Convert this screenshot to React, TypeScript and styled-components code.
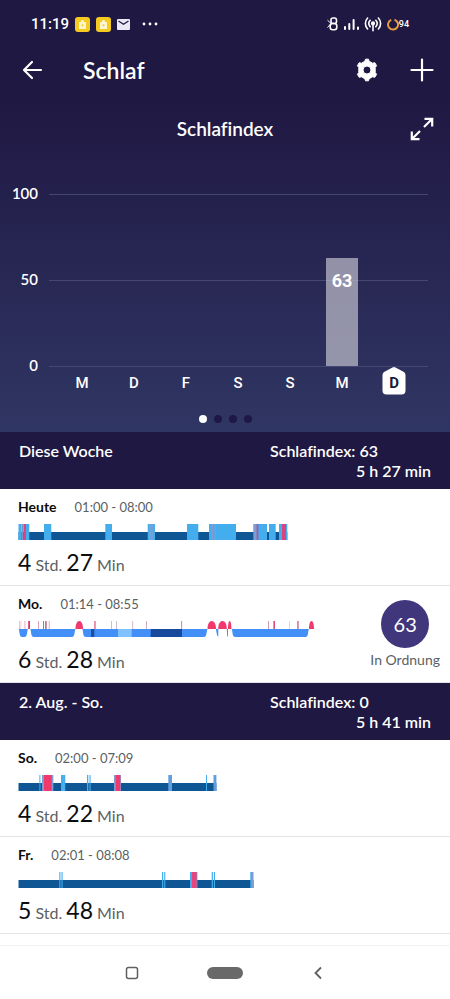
import React from "react";
import styled, { createGlobalStyle } from "styled-components";

const GlobalStyle = createGlobalStyle`
  * { box-sizing: border-box; }
  body {
    margin: 0;
    background: #fff;
    font-family: Lato, "Open Sans", sans-serif;
    font-variant-ligatures: none;
  }
  button { border: 0; padding: 0; background: none; color: inherit; font: inherit; cursor: pointer; }
  h1, h2, h3, p { margin: 0; font-size: inherit; font-weight: inherit; }
  svg { display: block; flex: none; }
`;

const Page = styled.div`
  display: flex;
  flex-direction: column;
  min-height: 100vh;
`;

const Hero = styled.section`
  color: #fff;
  background: linear-gradient(#1f1842 0, #1f1842 96px, #221c48 150px, #303663 100%);
`;

const StatusBar = styled.div`
  display: flex;
  align-items: center;
  justify-content: space-between;
  height: 48px;
  padding: 0 41px 0 31px;
  font-family: Roboto, sans-serif;
`;

const StatusGroup = styled.div<{ $gap: number }>`
  display: flex;
  align-items: center;
  gap: ${(p) => p.$gap}px;
`;

const Clock = styled.span`
  font-size: 15px;
  font-weight: 500;
`;

const Battery = styled.span`
  display: flex;
  align-items: center;
  font-size: 9px;
  font-weight: 500;
`;

const AppBar = styled.header`
  display: flex;
  align-items: center;
  height: 44px;
  padding: 0 16px 0 20px;
`;

const AppTitle = styled.h1`
  flex: 1;
  margin-left: 39px;
  font-size: 23px;
  line-height: 28px;
  font-weight: 600;
`;

const IconButton = styled.button`
  display: flex;
  align-items: center;
  justify-content: center;
  width: 24px;
  height: 24px;
`;

const Actions = styled.div`
  display: flex;
  gap: 31px;
`;

const ChartHead = styled.div`
  display: grid;
  grid-template-columns: 1fr auto 1fr;
  align-items: center;
  justify-items: end;
  height: 74px;
  padding: 0 16px;
`;

const ChartTitle = styled.h2`
  grid-column: 2;
  font-size: 19px;
  line-height: 24px;
  font-weight: 600;
`;

const Plot = styled.div`
  display: grid;
  grid-template-columns: 38px 1fr;
  column-gap: 11px;
  margin: 18px 22px 0 0;
`;

const Axis = styled.div`
  display: flex;
  flex-direction: column;
  justify-content: space-between;
  align-items: flex-end;
  height: 192px;
  font-size: 15px;
  line-height: 18px;
  font-weight: 600;
  padding-bottom: 2px;
`;

const GridLines = styled.div`
  grid-area: 1 / 2;
  display: flex;
  flex-direction: column;
  justify-content: space-between;
  padding: 10px 0 9px;
`;

const GridLine = styled.div`
  height: 1px;
  background: #454674;
`;

const Bars = styled.div`
  grid-area: 1 / 2;
  display: grid;
  grid-template-columns: repeat(7, 1fr);
  align-items: end;
  justify-items: center;
  padding: 10px 8px 10px 7px;
`;

const Bar = styled.div`
  width: 32px;
  padding-top: 12px;
  background: rgba(205, 203, 214, 0.65);
  font: 700 18px/22px Roboto, sans-serif;
  text-align: center;
`;

const Days = styled.div`
  grid-column: 2;
  display: grid;
  grid-template-columns: repeat(7, 1fr);
  justify-items: center;
  align-items: center;
  height: 28px;
  margin-top: -9px;
  padding: 0 8px 0 7px;
  font: 500 15px/20px Roboto, sans-serif;
`;

const Today = styled.span`
  display: grid;
  place-items: center;
  color: #14203a;
  font-weight: 700;

  > * { grid-area: 1 / 1; }
  > span { margin-top: 3px; }
`;

const DayName = styled.span`
  margin-top: 4px;
`;

const Dots = styled.div`
  display: flex;
  justify-content: center;
  gap: 7px;
  padding: 20px 0 9px;
`;

const Dot = styled.button<{ $on?: boolean }>`
  width: 8px;
  height: 8px;
  border-radius: 50%;
  background: ${(p) => (p.$on ? "#fff" : "#1f1746")};
`;

const WeekHead = styled.header`
  display: flex;
  justify-content: space-between;
  height: 57px;
  padding: 9px 19px 0;
  background: #1f1842;
  color: #fff;
  font-size: 16px;
  line-height: 20px;
  font-weight: 600;
`;

const WeekStats = styled.div`
  display: flex;
  flex-direction: column;
  width: 161px;

  > :last-child { align-self: flex-end; }
`;

const Night = styled.article`
  display: flex;
  justify-content: space-between;
  height: 97px;
  padding: 8px 10px 0 18px;
  border-bottom: 1px solid #e4e4e6;
  color: #5b5f63;
`;

const NightHead = styled.div`
  display: flex;
  gap: 18px;
  font-size: 13px;
  line-height: 20px;
`;

const NightDay = styled.h3`
  font-size: 14px;
  font-weight: 700;
  color: #0c0c0e;
`;

const Timeline = styled.svg`
  margin: 7px 0 11px;
`;

const Duration = styled.p`
  font-size: 16px;
  line-height: 28px;
`;

const Amount = styled.span`
  font-size: 23px;
  line-height: 23px;
  color: #0c0c0e;
`;

const Score = styled.div`
  display: flex;
  flex-direction: column;
  align-items: center;
  margin-top: 6px;
  font-size: 14px;
  line-height: 24px;
`;

const ScoreDisc = styled.div`
  width: 48px;
  height: 48px;
  border-radius: 50%;
  background: #40367c;
  color: #fff;
  font-size: 20px;
  line-height: 48px;
  text-align: center;
`;

const NavBar = styled.nav`
  display: flex;
  align-items: center;
  justify-content: center;
  gap: 45px;
  height: 54px;
  margin-top: auto;
  border-top: 1px solid #f3f3f3;
  color: #606060;
`;

const NavButton = styled.button`
  display: flex;
  align-items: center;
  justify-content: center;
  width: 48px;
  height: 48px;
`;

const DEEP = "#0f5694";
const SKY = "#43adee";
const PINK = "#f0396c";
const MIX = "#7f9dd4";
const BLUE = "#418ff7";

/* [start, end, colour] */
type Span = [number, number, string];

function Restless({ end, spans }: { end: number; spans: Span[] }) {
  return (
    <Timeline width="300" height="16" viewBox="0 0 300 16" role="img" aria-label="Schlafverlauf">
      <rect x="0.5" y="8" width={end - 0.5} height="8" fill={DEEP} />
      {spans.map(([a, b, c], i) => (
        <rect key={i} x={a} width={b - a} height="16" fill={c} />
      ))}
    </Timeline>
  );
}

const blocks: Span[] = [
  [73, 76.3, "#1b4fa5"],
  [100, 113.7, "#80c2fd"],
  [132.7, 164, "#174a9d"],
];

const sleepRuns: [number, number][] = [[0.8, 10], [12.4, 57.5], [64.4, 189.5], [213.8, 291]];

const domes: [number, number][] = [[57.5, 65], [189.5, 198], [200.2, 208.8], [210, 213.4], [291, 296]];

const ticks: Span[] = [
  [1, 1.7, "#e6a6b9"], [2.6, 3.2, "#eab5c4"], [6.6, 7.3, "#e48ba5"], [10.2, 12, "#d93766"],
  [20, 20.8, "#df91a8"], [25, 26, "#dd5b80"], [27.2, 28.6, "#a85683"], [30.8, 31.6, "#df91a8"],
  [76.3, 77.6, "#dd5b80"], [93, 93.7, "#b4a3bb"], [98, 98.7, "#b4a3bb"], [114.4, 115.1, "#cc98ac"],
  [128, 128.7, "#c58aa5"], [163.3, 164.1, "#b66b92"], [250, 250.8, "#c9839e"], [255.4, 257, "#d94b76"],
  [271.4, 272, "#d5b4c2"], [279.3, 280.6, "#c85b81"],
];

function Stages() {
  return (
    <Timeline width="300" height="16" viewBox="0 0 300 16" role="img" aria-label="Schlafphasen">
      {sleepRuns.map(([a, b]) => (
        <path key={a} fill={BLUE} d={`M${a} 8H${b}C${b - 1.2} 10 ${b - 0.3} 16 ${b - 3.5} 16H${a + 3.5}C${a + 0.3} 16 ${a + 1} 11 ${a} 8Z`} />
      ))}
      <path fill={BLUE} d="M198 8H200.3V15.5Q198.8 15.5 198 8ZM208.8 8H210V15.5H209.2Z" />
      {blocks.map(([a, b, c]) => (
        <rect key={a} x={a} y="8" width={b - a} height="8" fill={c} />
      ))}
      {domes.map(([a, b]) => (
        <path key={a} fill={PINK} d={`M${a} 8C${a} 3 ${a + (b - a) / 5} 0 ${(a + b) / 2} 0S${b} 3 ${b} 8Z`} />
      ))}
      {ticks.map(([a, b, c]) => (
        <rect key={a} x={a} width={b - a} height="8" fill={c} />
      ))}
    </Timeline>
  );
}

const todaySpans: Span[] = [
  [0.5, 3.5, SKY], [3.5, 5.5, "#7894cc"], [5.5, 8, "#dc457c"], [8, 11.3, SKY], [26, 33.3, SKY], [87.3, 94, SKY],
  [129.7, 137, SKY], [131, 135.5, "#6ea4dc"], [169, 180.3, SKY], [191, 218, SKY], [193.5, 195, MIX], [196.5, 198, MIX],
  [235.3, 249, SKY], [236, 238.6, MIX], [238.6, 240.3, "#c34e8a"], [251, 257.7, SKY], [261, 269.3, SKY],
  [264, 268, "#dc457c"],
];

const sundaySpans: Span[] = [
  [21.4, 22.4, SKY], [24, 35.3, MIX], [26, 33.7, PINK], [43, 47.3, SKY], [45, 46, MIX], [69, 70.3, SKY],
  [71.5, 72.6, SKY], [96, 103, MIX], [97.7, 102.3, PINK], [150.3, 154, "#619fdc"], [188, 189, SKY], [195.5, 198.4, "#619fdc"],
];

const fridaySpans: Span[] = [
  [41.3, 42.4, SKY], [43.5, 44.6, SKY], [144, 145.2, SKY], [146.2, 147.3, SKY], [172, 179.4, SKY],
  [174, 178.7, "#e8457c"], [193.7, 194.9, SKY], [195.9, 197, SKY], [232.3, 234, SKY], [234, 235.5, MIX],
];

interface NightProps {
  day: string;
  time: string;
  hours: number;
  minutes: number;
  children: React.ReactNode;
  score?: React.ReactNode;
}

function NightRow({ day, time, hours, minutes, children, score }: NightProps) {
  return (
    <Night>
      <div>
        <NightHead>
          <NightDay>{day}</NightDay>
          <span>{time}</span>
        </NightHead>
        {children}
        <Duration>
          <Amount>{hours}</Amount> Std. <Amount>{minutes}</Amount> Min
        </Duration>
      </div>
      {score}
    </Night>
  );
}

function WeekHeader({ title, index, total }: { title: string; index: number; total: string }) {
  return (
    <WeekHead>
      <h2>{title}</h2>
      <WeekStats>
        <span>Schlafindex: {index}</span>
        <span>{total}</span>
      </WeekStats>
    </WeekHead>
  );
}

function AppBadge() {
  return (
    <svg width="15" height="15" viewBox="0 0 15 15">
      <rect width="15" height="15" rx="3" fill="#f5cb22" />
      <path d="M4 5h2L6.5 3h2L9 5h2v6.5q0 .5-.5.5h-6q-.5 0-.5-.5Z" fill="#fff6cf" />
      <circle cx="7.5" cy="8.3" r="1.1" fill="#f2cf3c" />
    </svg>
  );
}

export default function App() {
  return (
    <Page>
      <GlobalStyle />
      <Hero>
        <StatusBar>
          <StatusGroup $gap={6}>
            <Clock>11:19</Clock>
            <AppBadge />
            <AppBadge />
            <svg width="13" height="11" viewBox="0 0 13 11">
              <rect width="13" height="11" rx="1" fill="#ebe8f6" />
              <path d="M1.5 2 6.5 5.3 11.5 2" fill="none" stroke="#1f1842" strokeWidth="1.3" />
            </svg>
            <svg width="28" height="4" viewBox="0 0 28 4" fill="#fff">
              <circle cx="8" cy="2" r="1.4" />
              <circle cx="14" cy="2" r="1.4" />
              <circle cx="20" cy="2" r="1.4" />
            </svg>
          </StatusGroup>
          <StatusGroup $gap={5}>
            <svg width="11" height="14" viewBox="0 0 11 14" fill="none" stroke="#fff" strokeWidth="1.6">
              <rect x="4" y="1" width="5.5" height="5.5" rx="2" />
              <rect x="3.2" y="6.5" width="6.6" height="6.2" rx="2.4" />
              <path d="m.5 3.2 3.5 3.3L.5 10.5" strokeWidth="1" />
            </svg>
            <svg width="16" height="14" viewBox="0 0 16 14" stroke="#fff" strokeWidth="2" strokeLinecap="round">
              <path d="M2 12v-2M6.3 12V7M10.6 12V3M15 12v-1.5" />
            </svg>
            <svg width="18" height="15" viewBox="0 0 18 15" fill="none" stroke="#fff" strokeWidth="1.6" strokeLinecap="round">
              <path d="M3.6 1a8 8 0 0 0 0 11M14.4 1a8 8 0 0 1 0 11M6.2 3.3a4.8 4.8 0 0 0 0 6.4M11.8 3.3a4.8 4.8 0 0 1 0 6.4M9 7v6.8" />
              <circle cx="9" cy="6.4" r="1.3" fill="#fff" />
            </svg>
            <Battery>
              <svg width="12" height="13" viewBox="0 0 12 13" fill="none" stroke="#e99a3c" strokeWidth="2">
                <path d="M7.5 1.8A5 5 0 1 1 4.3 1.9" />
              </svg>
              94
            </Battery>
          </StatusGroup>
        </StatusBar>
        <AppBar>
          <IconButton aria-label="Zurück">
            <svg width="24" height="24" viewBox="0 0 24 24" fill="none" stroke="#fff" strokeWidth="2.2" strokeLinecap="round" strokeLinejoin="round">
              <path d="M21 12H4M12 4 4 12l8 8" />
            </svg>
          </IconButton>
          <AppTitle>Schlaf</AppTitle>
          <Actions>
            <IconButton aria-label="Einstellungen">
              <svg width="24" height="24" viewBox="0 0 24 24" fill="#fff">
                <path fillRule="evenodd" stroke="#fff" strokeWidth="1" strokeLinejoin="round" d="M10.500 1.200h3l.6 2 3.400 2 2.300-.5 1.800 3-1.400 1.800v5l1.400 1.800-1.800 3-2.300-.5-3.400 2-.6 2h-3l-.6-2-3.400-2-2.300.5-1.800-3 1.400-1.800v-5L2.400 7.700l1.800-3 2.300.5 3.400-2ZM12 8a4 4 0 1 0 0 8 4 4 0 0 0 0-8Z" />
              </svg>
            </IconButton>
            <IconButton aria-label="Hinzufügen">
              <svg width="24" height="24" viewBox="0 0 24 24" stroke="#fff" strokeWidth="2.2" strokeLinecap="round">
                <path d="M12 1.5v21M1.5 12h21" />
              </svg>
            </IconButton>
          </Actions>
        </AppBar>
        <ChartHead>
          <ChartTitle>Schlafindex</ChartTitle>
          <IconButton aria-label="Vergrößern">
            <svg width="24" height="24" viewBox="0 0 24 24" fill="none" stroke="#fff" strokeWidth="2.2">
              <path d="M14.5 1.8h7.700v7.700M22 2 14 10M9.5 22.200H1.800v-7.700M2 22 10 14" />
            </svg>
          </IconButton>
        </ChartHead>
        <Plot>
          <Axis>
            <span>100</span>
            <span>50</span>
            <span>0</span>
          </Axis>
          <GridLines>
            <GridLine />
            <GridLine />
            <GridLine />
          </GridLines>
          <Bars>
            {[0, 0, 0, 0, 0, 63, 0].map((v, i) => (v ? <Bar key={i} style={{ height: `${v}%` }}>{v}</Bar> : <span key={i} />))}
          </Bars>
          <Days>
            {["M", "D", "F", "S", "S", "M"].map((d, i) => (
              <DayName key={i}>{d}</DayName>
            ))}
            <Today>
              <svg width="24" height="28" viewBox="0 0 24 28" fill="#fff">
                <path d="M10.5.5q1.5-.8 3 0l8 4.2q2 1.1 2 3.3v15.500q0 4-4 4h-15q-4 0-4-4V8q0-2.200 2-3.300Z" />
              </svg>
              <span>D</span>
            </Today>
          </Days>
        </Plot>
        <Dots>
          <Dot $on aria-label="Seite 1" />
          <Dot aria-label="Seite 2" />
          <Dot aria-label="Seite 3" />
          <Dot aria-label="Seite 4" />
        </Dots>
      </Hero>

      <section>
        <WeekHeader title="Diese Woche" index={63} total="5 h 27 min" />
        <NightRow day="Heute" time="01:00 - 08:00" hours={4} minutes={27}>
          <Restless end={269.3} spans={todaySpans} />
        </NightRow>
        <NightRow
          day="Mo."
          time="01:14 - 08:55"
          hours={6}
          minutes={28}
          score={
            <Score>
              <ScoreDisc>63</ScoreDisc>
              In Ordnung
            </Score>
          }
        >
          <Stages />
        </NightRow>
      </section>

      <section>
        <WeekHeader title="2. Aug. - So." index={0} total="5 h 41 min" />
        <NightRow day="So." time="02:00 - 07:09" hours={4} minutes={22}>
          <Restless end={198.4} spans={sundaySpans} />
        </NightRow>
        <NightRow day="Fr." time="02:01 - 08:08" hours={5} minutes={48}>
          <Restless end={235.5} spans={fridaySpans} />
        </NightRow>
      </section>

      <NavBar>
        <NavButton aria-label="Übersicht">
          <svg width="14" height="14" viewBox="0 0 14 14" fill="none" stroke="currentColor" strokeWidth="1.5">
            <rect x="1.500" y="1.500" width="11" height="11" rx="2" />
          </svg>
        </NavButton>
        <NavButton aria-label="Startseite">
          <svg width="36" height="12" viewBox="0 0 36 12" fill="#696969">
            <rect width="36" height="12" rx="6" />
          </svg>
        </NavButton>
        <NavButton aria-label="Zurück">
          <svg width="12" height="14" viewBox="0 0 12 14" fill="none" stroke="currentColor" strokeWidth="1.8">
            <path d="M9 1.500 3.500 7 9 12.500" />
          </svg>
        </NavButton>
      </NavBar>
    </Page>
  );
}
